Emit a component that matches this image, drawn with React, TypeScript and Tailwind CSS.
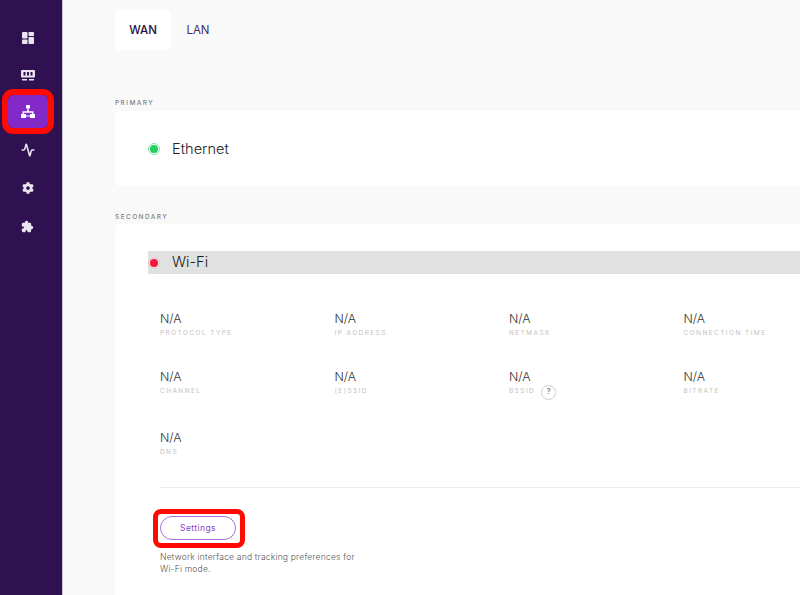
import { Activity } from "lucide-react";
import { FaCog } from "react-icons/fa";
import { IoExtensionPuzzle } from "react-icons/io5";

const rows = [
  { height: "h-[58px]", labels: ["Protocol type", "IP address", "Netmask", "Connection time"] },
  { height: "h-[61px]", labels: ["Channel", "(E)SSID", "BSSID", "Bitrate"] },
  { height: "h-[57px]", labels: ["DNS"] },
];

function DashboardIcon() {
  return (
    <svg viewBox="0 0 12 12" className="h-[12px] w-[12px]" fill="currentColor">
      <rect x="0" y="0" width="5.5" height="6.5" rx="0.8" />
      <rect x="6.5" y="0" width="5.5" height="4" rx="0.8" />
      <rect x="0" y="7.5" width="5.5" height="4.5" rx="0.8" />
      <rect x="6.5" y="5" width="5.5" height="7" rx="0.8" />
    </svg>
  );
}

function DeviceIcon() {
  return (
    <svg viewBox="0 0 14 11" className="h-[11px] w-[14px]" fill="currentColor">
      <path d="M1 0h12a1 1 0 0 1 1 1v5.5a1 1 0 0 1-1 1H1a1 1 0 0 1-1-1V1a1 1 0 0 1 1-1Z" />
      <rect x="2.5" y="2" width="2" height="3.5" fill="#2f1152" />
      <rect x="6" y="2" width="2" height="3.5" fill="#2f1152" />
      <rect x="9.5" y="2" width="2" height="3.5" fill="#2f1152" />
      <rect x="1" y="9" width="5" height="1.5" />
      <rect x="8" y="9" width="5" height="1.5" />
    </svg>
  );
}

function NetworkIcon() {
  return (
    <svg viewBox="0 0 14 13" className="h-[13px] w-[14px]" fill="currentColor">
      <rect x="5" y="0" width="4" height="3.5" rx="0.5" />
      <rect x="0" y="9" width="5" height="4" rx="0.5" />
      <rect x="9" y="9" width="5" height="4" rx="0.5" />
      <rect x="5" y="10.5" width="4" height="1" />
      <path d="M6.3 3.5h1.4v2.8h4.8v2.7h-1.4V7.7H2.9V9H1.5V6.3h4.8Z" />
    </svg>
  );
}

function StatusDot({ color, ring }: { color: string; ring: string }) {
  return (
    <span className={`flex h-3 w-3 items-center justify-center rounded-full border ${ring}`}>
      <span className={`h-2 w-2 rounded-full ${color}`} />
    </span>
  );
}

function Stat({ label }: { label: string }) {
  return (
    <div>
      <div className="text-[12.3px] font-light leading-[16px] text-[#333333]">N/A</div>
      <div className="flex h-[14px] items-center gap-[6px] text-[6.5px] uppercase tracking-[0.22em] text-[#c2c2c2]">
        {label}
        {label === "BSSID" && (
          <span className="flex h-[15px] w-[15px] shrink-0 items-center justify-center rounded-full border border-[#d0d0d0] text-[7px] font-semibold tracking-normal text-[#777777]">
            ?
          </span>
        )}
      </div>
    </div>
  );
}

export default function App() {
  return (
    <div className="flex h-[595px] w-[800px] overflow-hidden bg-[#f9f9f9] font-['Inter',sans-serif]">
      <nav className="flex w-[63px] shrink-0 flex-col items-center border-r border-[#c9c4d0] bg-[#2f1152] pt-[19px] text-[#e9e4ee]">
        <div className="flex h-[37px] w-full items-center justify-center pr-[7px]">
          <DashboardIcon />
        </div>
        <div className="flex h-[38px] w-full items-center justify-center pr-[7px]">
          <DeviceIcon />
        </div>
        <div className="relative ml-[-7px] mt-[1px] flex h-[33px] w-[40px] items-center justify-center rounded-[5px] bg-[#8229c8] text-white outline-[6px] outline-[#ff0a00] outline-offset-0">
          <NetworkIcon />
        </div>
        <div className="mt-[3px] flex h-[38px] w-full items-center justify-center pr-[7px]">
          <Activity size={14} strokeWidth={2.7} />
        </div>
        <div className="flex h-[38px] w-full items-center justify-center pr-[7px]">
          <FaCog size={12} />
        </div>
        <div className="flex h-[38px] w-full items-center justify-center pr-[7px]">
          <IoExtensionPuzzle size={13} />
        </div>
      </nav>

      <main className="flex min-w-0 flex-1 flex-col pl-[52px]">
        <div className="flex h-[50px] shrink-0 items-end">
          <div className="flex h-[40px] w-[56px] items-center justify-center rounded-[3px] bg-white pt-[1px] text-[11.5px] font-medium text-[#230c40]">
            WAN
          </div>
          <div className="flex h-[40px] w-[54px] items-center justify-center pt-[1px] text-[11.5px] text-[#46305f]">
            LAN
          </div>
        </div>

        <div className="mt-[49px] h-[12px] shrink-0 pt-[1px] text-[6.5px] font-medium uppercase leading-[7px] tracking-[0.22em] text-[#808080]">
          Primary
        </div>
        <section className="flex h-[75px] w-[760px] shrink-0 items-center gap-[12px] rounded-[5px] bg-white pl-[33px]">
          <StatusDot color="bg-[#22cf5f]" ring="border-[#7ce6a1]" />
          <span className="pt-[2px] text-[14.6px] font-light text-[#222222]">Ethernet</span>
        </section>

        <div className="mt-[26px] h-[12px] shrink-0 pt-[2px] text-[6.5px] font-medium uppercase leading-[7px] tracking-[0.22em] text-[#808080]">
          Secondary
        </div>
        <section className="w-[760px] flex-1 rounded-t-[5px] bg-white pl-[33px] pt-[27px]">
          <div className="flex h-[23px] items-center gap-[12px] bg-[#e1e1e1]">
            <StatusDot color="bg-[#f5173d]" ring="border-[#efc4cc]" />
            <span className="pt-[1px] text-[14.6px] font-light text-[#1c1c1c]">Wi-Fi</span>
          </div>

          <div className="pl-[12px] pt-[37px]">
            {rows.map((row) => (
              <div key={row.labels[0]} className={`grid grid-cols-[174.5px_174.5px_174.5px_1fr] ${row.height}`}>
                {row.labels.map((label) => (
                  <Stat key={label} label={label} />
                ))}
              </div>
            ))}
            <div className="h-[1px] bg-[#eeeeee]" />
            <div className="relative mt-[28px] h-[24px] w-[76px]">
              <button className="block h-full w-full rounded-full border border-[#a56fdc] text-[8.5px] tracking-[0.05em] text-[#8a3fd0]">
                Settings
              </button>
              <div className="absolute bottom-[-8px] left-[-7px] right-[-9px] top-[-7px] rounded-[8px] border-[5px] border-[#ff0a00]" />
            </div>
            <p className="mt-[11px] w-[200px] text-[8.5px] font-light leading-[12px] tracking-[0.025em] text-[#555555]">
              Network interface and tracking preferences for Wi-Fi mode.
            </p>
          </div>
        </section>
      </main>
    </div>
  );
}
